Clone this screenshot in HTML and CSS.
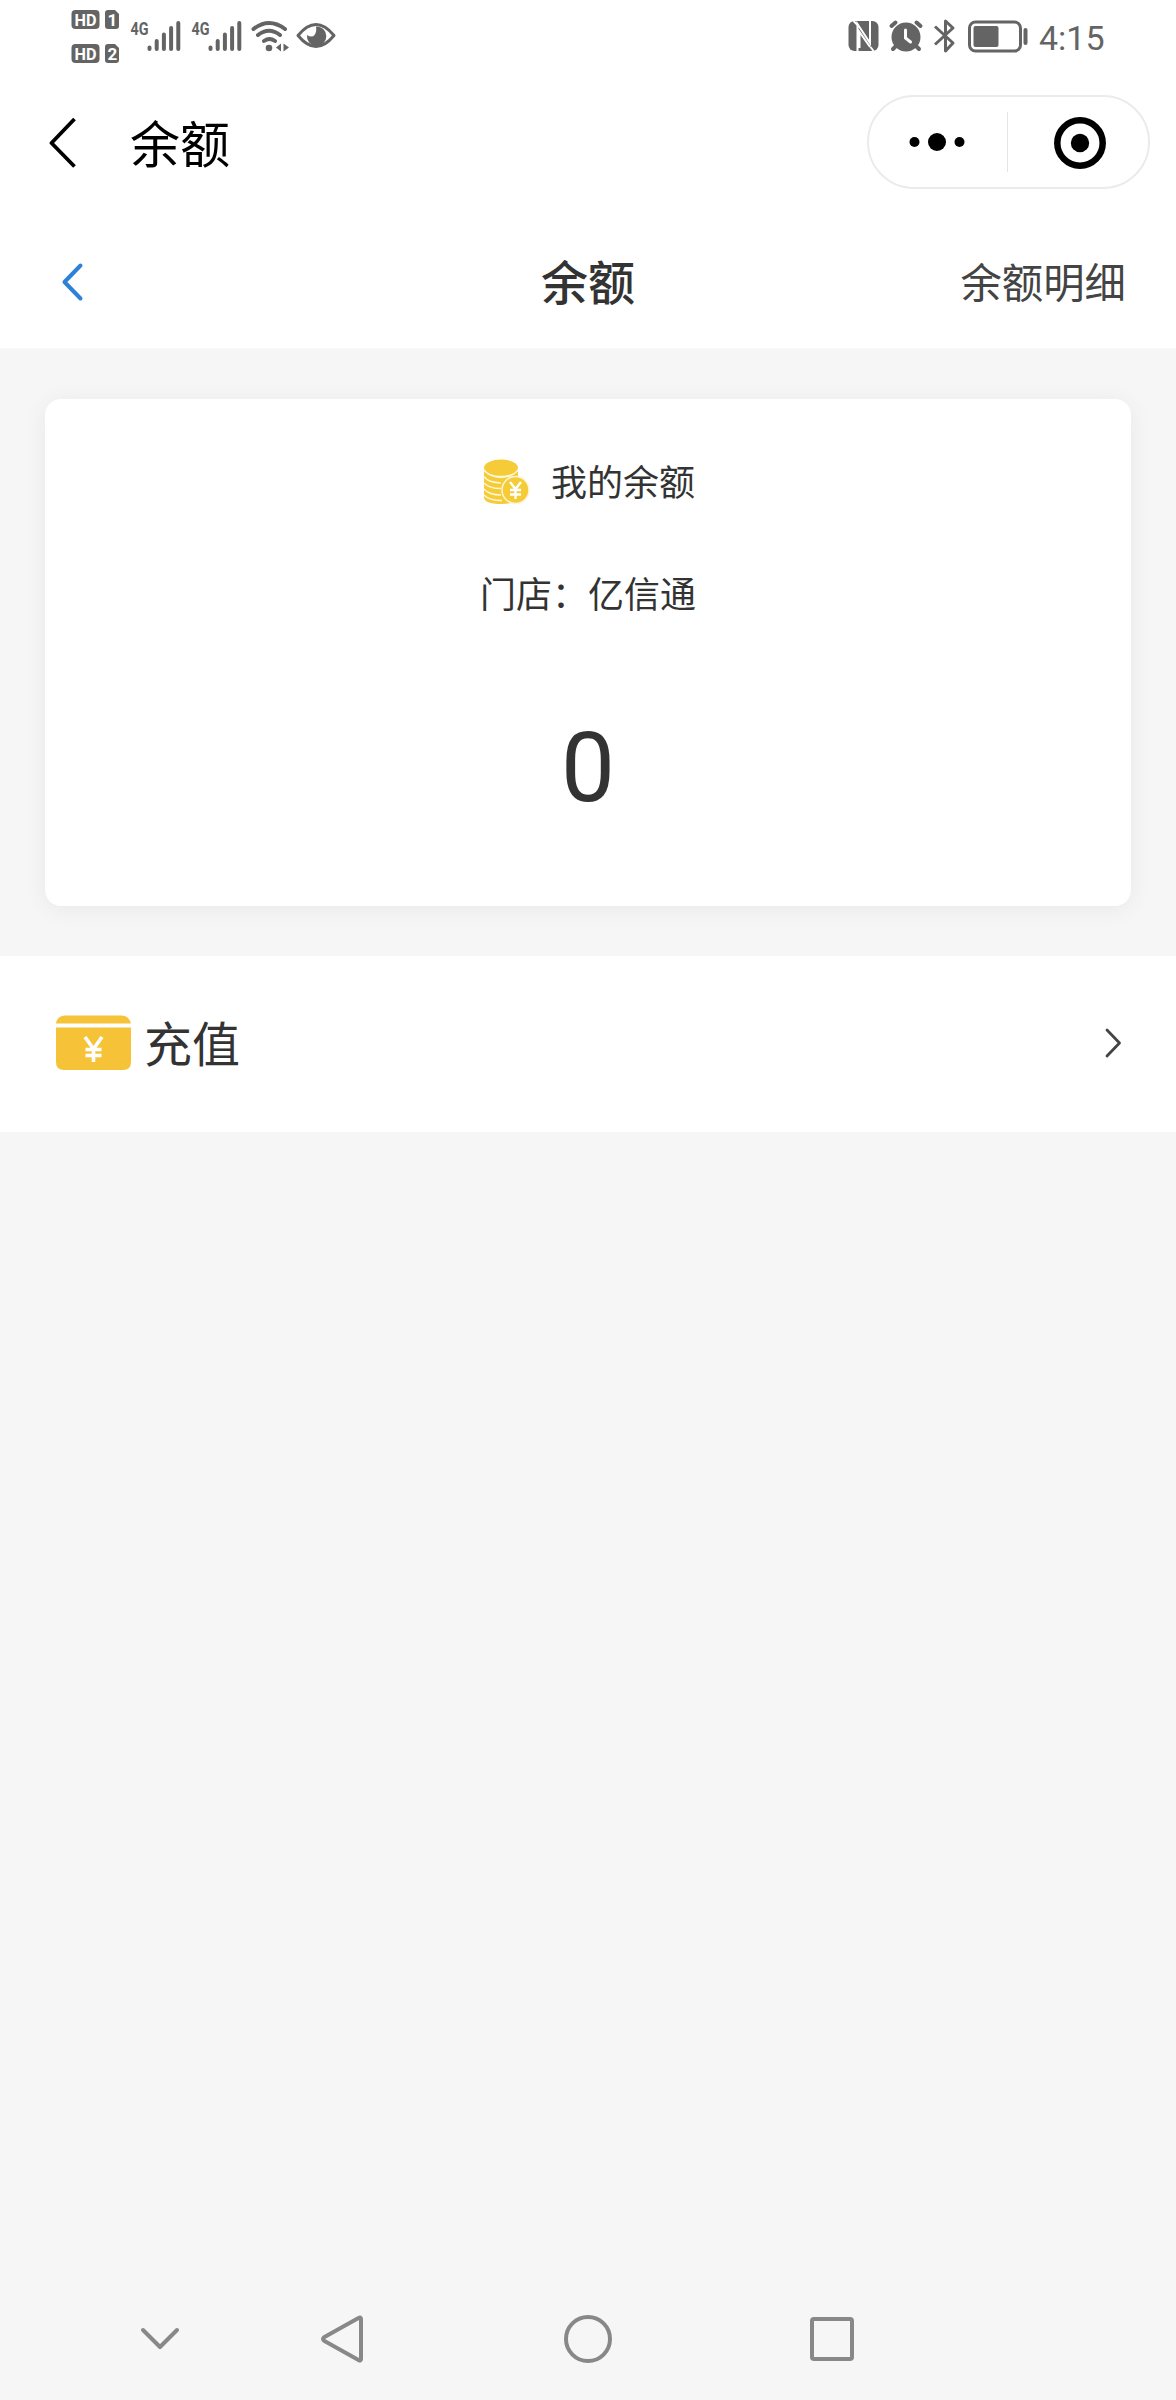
FILE: index.html
```html
<!DOCTYPE html>
<html lang="zh-CN">
<head>
<meta charset="utf-8">
<title>余额</title>
<link rel="stylesheet" href="styles.css">
</head>
<body>
<div class="screen">
  <div class="status-bar">
    <svg class="status-left" width="268" height="72" viewBox="70 0 268 72">
      <g fill="#646464">
        <rect x="71.500" y="10" width="28" height="19" rx="4"/>
        <path d="M108 10h7l4 4v12q0 3-3 3h-8q-3 0-3-3V13q0-3 3-3z"/>
        <rect x="71.500" y="44" width="28" height="19" rx="4"/>
        <path d="M108 44h7l4 4v12q0 3-3 3h-8q-3 0-3-3V47q0-3 3-3z"/>
      </g>
      <g class="badge-text">
        <text x="74.500" y="25.500" textLength="22" lengthAdjust="spacingAndGlyphs">HD</text>
        <text x="107.500" y="26">1</text>
        <text x="74.500" y="59.500" textLength="22" lengthAdjust="spacingAndGlyphs">HD</text>
        <text x="107.500" y="60">2</text>
      </g>
      <g class="net-text">
        <text x="130.500" y="34.500" textLength="18" lengthAdjust="spacingAndGlyphs">4G</text>
        <text x="191.500" y="34.500" textLength="18" lengthAdjust="spacingAndGlyphs">4G</text>
      </g>
      <g stroke="#646464" stroke-width="4" stroke-linecap="round" fill="none">
        <path d="M149.500 47.500v1.500M156.700 41v8M163.900 34.500V49M171.100 28V49M178.300 23V49"/>
        <path d="M210.500 47.500v1.500M217.700 41v8M224.900 34.500V49M232.100 28V49M239.300 23V49"/>
        <path d="M253.500 29q15.500-12 31.500 0M258 35q11-8.500 22 0M264 41q5.500-4 11 0"/>
      </g>
      <circle cx="269" cy="48" r="3.300" fill="#646464"/>
      <path d="M276 47.500l5-4v8zM283.500 43.500l5.500 4-5.500 4z" fill="#646464"/>
      <path d="M298 35.500q18-22 36 0q-18 22-36 0z" fill="none" stroke="#646464" stroke-width="3" stroke-linejoin="round"/>
      <path d="M316 26.500a9.700 9.700 0 1 1-9 8.500q5 3 7.500 0t1.500-8.500z" fill="#646464"/>
    </svg>
    <div class="status-right">
      <svg width="182" height="72" viewBox="848 0 182 72">
        <rect x="848.500" y="21" width="30" height="30" rx="6" fill="#646464"/>
        <path d="M857.500 51V24l12.500 19V21M853.500 21l4 4M870 47l-10.500-15v16M870.500 47l3 4" fill="none" stroke="#fff" stroke-width="2"/>
        <g fill="none" stroke="#646464" stroke-width="4" stroke-linecap="round">
          <circle cx="906" cy="37" r="12.500" fill="#646464"/>
          <path d="M891.500 26l4-3.500M916.500 22.500l4 3.500M896 46l-3 3M916 46l3 3"/>
          <path d="M905.500 30v8l5 4" stroke="#fff" stroke-width="3"/>
        </g>
        <path d="M935 26.500l18 16.500-7.500 8V21l7.500 7-18 16.500" fill="none" stroke="#646464" stroke-width="3" stroke-linejoin="round"/>
        <rect x="969.500" y="22" width="51" height="29" rx="6" fill="none" stroke="#646464" stroke-width="3"/>
        <rect x="973.500" y="26" width="25" height="21" rx="2" fill="#646464"/>
        <rect x="1023.500" y="28" width="4" height="17" rx="2" fill="#646464"/>
      </svg>
      <span class="clock">4:15</span>
    </div>
  </div>

  <header class="app-bar">
    <svg width="27" height="52" viewBox="0 0 27 52" fill="none" stroke="#000" stroke-width="3.800" stroke-linejoin="round"><path d="M25.500 3L2.500 27l23 23.500"/></svg>
    <span class="app-title">余额</span>
    <div class="capsule">
      <span class="capsule-half dots"><svg width="56" height="20" viewBox="0 0 56 20"><circle cx="5.500" cy="10" r="5"/><circle cx="28" cy="10" r="9"/><circle cx="50.500" cy="10" r="5"/></svg></span>
      <span class="capsule-line"></span>
      <span class="capsule-half ring"><svg width="52" height="52" viewBox="0 0 52 52"><circle cx="26" cy="26" r="22.700" fill="none" stroke="#000" stroke-width="6.500"/><circle cx="26" cy="26" r="9.200"/></svg></span>
    </div>
  </header>

  <nav class="nav-bar">
    <svg class="back" width="24" height="40" viewBox="0 0 24 40" fill="none" stroke="#2d82d8" stroke-width="4" stroke-linecap="round" stroke-linejoin="round"><path d="M20.500 3.500L4.500 20l16 16.500"/></svg>
    <h1>余额</h1>
    <a class="detail">余额明细</a>
  </nav>

  <main>
    <section class="card">
      <div class="card-title">
        <svg width="48" height="48" viewBox="0 0 48 48">
          <g fill="#f5cb38">
            <ellipse cx="18" cy="9" rx="17" ry="8.500"/>
            <path d="M1 12q6 7 17 7t17-7v26q0 7-17 7T1 38z"/>
          </g>
          <path d="M1 10.500q4 7 17 7t17-7M1 17.500q4 6 17 6.500M1 24q5 5.500 17 5.500M1 30q5 6 17 6M1 36q5 5.500 18 5.500" fill="none" stroke="#fff6d5" stroke-width="1.500"/>
          <circle cx="32.500" cy="31" r="13.500" fill="#f5cb38" stroke="#fff6d5" stroke-width="1.500"/>
          <path d="M27 23l5.500 7 5.500-7M32.500 30v10M27 31h11M27 35.500h11" fill="none" stroke="#fff" stroke-width="2.400"/>
        </svg>
        <span>我的余额</span>
      </div>
      <div class="store">门店：亿信通</div>
      <div class="amount">0</div>
    </section>

    <a class="recharge">
      <svg width="75" height="56" viewBox="0 0 75 56">
        <path d="M0 8.500Q1 1 9 .5h57q7 .5 9 8zM0 12.500h75V47q0 8-8 8H8q-8 0-8-8z" fill="#f6c338"/>
        <path d="M29 22l8.500 12L46 22M37.500 34v13M29.500 34.500h16M29.500 40.500h16" fill="none" stroke="#fff" stroke-width="3.600"/>
      </svg>
      <span>充值</span>
      <svg class="arrow" width="18" height="30" viewBox="0 0 18 30" fill="none" stroke="#444" stroke-width="2.800" stroke-linecap="round" stroke-linejoin="round"><path d="M3 2l12.500 13L3 28"/></svg>
    </a>
  </main>

  <footer class="system-nav">
    <svg width="40" height="50" viewBox="0 0 40 50"><path d="M3 16l17 17 17-17"/></svg>
    <svg width="44" height="50" viewBox="0 0 44 50"><path d="M38.500 4Q41 2.500 41 5v40q0 2.500-2.500 1L4.500 27q-3-2 0-4z"/></svg>
    <svg width="50" height="50" viewBox="0 0 50 50"><circle cx="25" cy="25" r="22"/></svg>
    <svg width="46" height="50" viewBox="0 0 46 50"><rect x="3" y="5" width="40" height="40" rx="2"/></svg>
  </footer>
</div>
</body>
</html>
```
FILE: styles.css
```css
* { box-sizing: border-box; }
body {
  margin: 0;
  background: #f6f6f6;
  color: #333;
  font-family: "Noto Sans CJK SC", sans-serif;
}
svg { display: block; flex: none; }
.screen {
  width: 1176px;
  height: 2400px;
  display: flex;
  flex-direction: column;
}
.status-bar {
  height: 72px;
  padding: 0 72px 0 70px;
  background: #fff;
  display: flex;
  justify-content: space-between;
}
.status-right { display: flex; gap: 9px; }
.clock {
  width: 65px;
  color: #646464;
  font: 400 34px/76px Roboto, sans-serif;
}
.badge-text {
  fill: #fff;
  font: 700 17px Roboto, sans-serif;
}
.net-text {
  fill: #646464;
  font: 700 19px Roboto, sans-serif;
}
.app-bar {
  height: 140px;
  padding: 0 26px 0 49px;
  background: #fff;
  color: #000;
  display: flex;
  align-items: center;
}
.app-title {
  margin-left: 54px;
  padding-bottom: 3px;
  font-size: 50px;
  line-height: 70px;
}
.capsule {
  width: 283px;
  height: 94px;
  margin-left: auto;
  border: 2px solid #ebebeb;
  border-radius: 47px;
  display: flex;
  align-items: center;
}
.capsule-half {
  flex: 1;
  display: flex;
  justify-content: center;
}
.dots { padding-right: 2px; }
.ring { padding: 1px 0 0 5px; }
.capsule-line { width: 1px; height: 60px; background: #e4e4e4; }
.nav-bar {
  height: 137px;
  padding: 3px 50px 0;
  background: #fff;
  border-bottom: 1px solid #f9f9f9;
  display: grid;
  grid-template-columns: 1fr auto 1fr;
  align-items: center;
}
.back { margin-left: 10px; }
.nav-bar h1 {
  margin: 0;
  padding-bottom: 3px;
  font-size: 47px;
  font-weight: 500;
  line-height: 70px;
}
.detail {
  justify-self: end;
  padding-bottom: 3px;
  color: #444;
  font-size: 41.4px;
  line-height: 60px;
}
main { flex: 1; }
.card {
  height: 507px;
  margin: 50px 45px;
  padding-top: 54px;
  border-radius: 16px;
  background: #fff;
  box-shadow: 0 3px 24px rgba(0, 0, 0, .06);
  display: flex;
  flex-direction: column;
  align-items: center;
  font-size: 36px;
  line-height: 54px;
}
.card-title { display: flex; align-items: flex-start; gap: 20px; }
.card-title svg { margin-top: 6px; margin-left: 2px; }
.store { margin-top: 58px; }
.amount {
  margin-top: 93px;
  font: 400 96px/112px Roboto, sans-serif;
}
.recharge {
  height: 176px;
  padding: 0 54px 3px 56px;
  background: #fff;
  font-size: 48px;
  line-height: 70px;
  display: flex;
  align-items: center;
}
.recharge span { margin-left: 13px; padding-bottom: 3px; }
.arrow { margin-left: auto; }
.system-nav {
  height: 122px;
  padding-left: 140px;
  display: grid;
  grid-template-columns: 180px 243px 246px auto;
  align-items: center;
}
.system-nav svg { fill: none; stroke: #888; stroke-width: 4; stroke-linecap: round; stroke-linejoin: round; }
```
